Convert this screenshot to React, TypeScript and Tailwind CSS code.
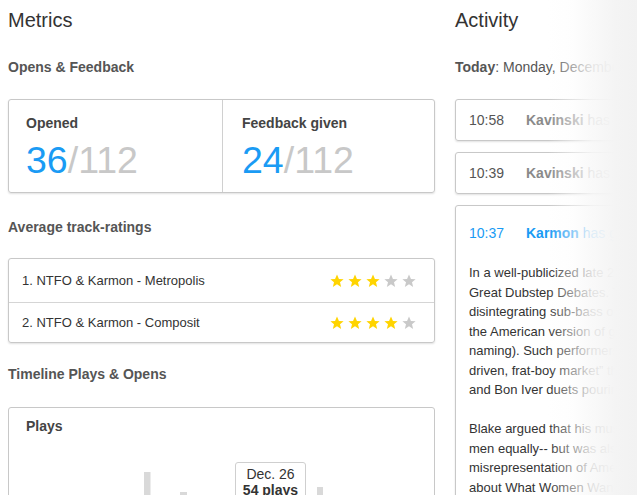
import React from "react";

const Star = ({ on }: { on: boolean }) => (
  <svg width="14" height="14" viewBox="0 0 14 14" className="block">
    <polygon
      points="7,0.6 8.95,4.9 13.6,5.2 10,8.2 11.15,12.9 7,10.35 2.85,12.9 4,8.2 0.4,5.2 5.05,4.9"
      fill={on ? "#FFD400" : "#C9C9C9"}
    />
  </svg>
);

const Stars = ({ n }: { n: number }) => (
  <div className="flex gap-[4px]">
    {[0, 1, 2, 3, 4].map((i) => (
      <Star key={i} on={i < n} />
    ))}
  </div>
);

const lines1 = [
  "In a well-publicized late 2013 interview, James Blake",
  "Great Dubstep Debates. The British producer lamented",
  "disintegrating sub-bass only to have it co-opted by",
  "the American version of guy-oriented dubstep (his",
  "naming). Such performers, he said, catered to a \u201cmacho,",
  "driven, frat-boy market\u201d that had little use for subtlety",
  "and Bon Iver duets pouring from his laptop.",
];

const lines2 = [
  "Blake argued that his music appealed to women and",
  "men equally-- but was also pointing to a larger",
  "misrepresentation of American dance culture, and",
  "about What Women Want, sonically speaking.",
];

export default function App() {
  return (
    <div className="relative w-[637px] h-[495px] overflow-hidden bg-white text-[#333] font-['Liberation_Sans',Arial,sans-serif]">
      <div className="flex pl-[8px] gap-[20px]">
        {/* Left column */}
        <div className="w-[427px] shrink-0">
          <h1 className="mt-[8px] text-[20px] leading-[24px] text-[#333]">Metrics</h1>
          <h2 className="mt-[25px] text-[14px] leading-[20px] font-bold text-[#555]">
            Opens &amp; Feedback
          </h2>
          <div className="mt-[22px] flex border border-[#c8c8c8] rounded-[3px] shadow-[0_1px_2px_rgba(0,0,0,0.12)]">
            <div className="w-[214px] shrink-0 border-r border-[#d0d0d0] pl-[17px] pt-[13px] pb-[12px]">
              <div className="text-[14px] leading-[20px] font-bold text-[#444]">Opened</div>
              <div className="mt-[7px] text-[37.5px] leading-[40px]">
                <span className="text-[#1a9bf4]">36</span>
                <span className="text-[#c8c8c8]">/112</span>
              </div>
            </div>
            <div className="flex-1 pl-[19px] pt-[13px] pb-[12px]">
              <div className="text-[14px] leading-[20px] font-bold text-[#444]">Feedback given</div>
              <div className="mt-[7px] text-[37.5px] leading-[40px]">
                <span className="text-[#1a9bf4]">24</span>
                <span className="text-[#c8c8c8]">/112</span>
              </div>
            </div>
          </div>

          <h2 className="mt-[24px] text-[14px] leading-[20px] font-bold text-[#555]">
            Average track-ratings
          </h2>
          <div className="mt-[21px] border border-[#c8c8c8] rounded-[3px] shadow-[0_1px_2px_rgba(0,0,0,0.12)]">
            <div className="h-[43px] flex items-center justify-between pl-[13px] pr-[18px] text-[13px] text-[#333]">
              <span>1. NTFO &amp; Karmon - Metropolis</span>
              <Stars n={3} />
            </div>
            <div className="h-[40px] border-t border-[#d5d5d5] flex items-center justify-between pl-[13px] pr-[18px] text-[13px] text-[#333]">
              <span>2. NTFO &amp; Karmon - Composit</span>
              <Stars n={4} />
            </div>
          </div>

          <h2 className="mt-[21px] text-[14px] leading-[20px] font-bold text-[#555]">
            Timeline Plays &amp; Opens
          </h2>
          <div className="mt-[23px] border border-[#c8c8c8] rounded-[3px] h-[120px]">
            <div className="pt-[8px] pl-[17px] text-[14px] leading-[20px] font-bold text-[#444]">Plays</div>
            <div className="relative h-[90px]">
              <svg width="425" height="90" className="absolute left-0 top-0">
                <rect x="135" y="36" width="6.5" height="60" fill="#d9d9d9" />
                <rect x="171" y="56" width="7" height="40" fill="#d9d9d9" />
                <rect x="308" y="51" width="6" height="45" fill="#d9d9d9" />
              </svg>
              <div className="absolute left-[226px] top-[26px] w-[71px] h-[44px] bg-white border border-[#cfcfcf] rounded-[3px] pt-[3px] text-center text-[14px] leading-[16px] text-[#333]">
                <div>Dec. 26</div>
                <div className="font-bold">54 plays</div>
              </div>
            </div>
          </div>
        </div>

        {/* Right column */}
        <div className="w-[320px] shrink-0">
          <h1 className="mt-[8px] text-[20px] leading-[24px] text-[#333]">Activity</h1>
          <div className="mt-[25px] text-[14px] leading-[20px] text-[#555] whitespace-nowrap">
            <span className="font-bold">Today</span>: Monday, December 29th
          </div>
          <div className="mt-[22px] h-[42px] flex items-center pl-[13px] border border-[#c8c8c8] rounded-[3px] shadow-[0_1px_2px_rgba(0,0,0,0.12)] text-[14px] whitespace-nowrap">
            <span className="w-[57px] text-[#555]">10:58</span>
            <span className="text-[#8a8a8a]">
              <span className="font-bold">Kavinski</span> has played Metropolis
            </span>
          </div>
          <div className="mt-[11px] h-[42px] flex items-center pl-[13px] border border-[#c8c8c8] rounded-[3px] shadow-[0_1px_2px_rgba(0,0,0,0.12)] text-[14px] whitespace-nowrap">
            <span className="w-[57px] text-[#555]">10:39</span>
            <span className="text-[#8a8a8a]">
              <span className="font-bold">Kavinski</span> has opened the promo
            </span>
          </div>
          <div className="mt-[11px] h-[320px] pl-[13px] pt-[17px] border border-[#c8c8c8] rounded-[3px] shadow-[0_1px_2px_rgba(0,0,0,0.12)] whitespace-nowrap">
            <div className="flex text-[14px] leading-[20px] text-[#1a9bf4]">
              <span className="w-[57px]">10:37</span>
              <span>
                <span className="font-bold">Karmon</span> has given feedback
              </span>
            </div>
            <div className="mt-[20px] text-[13px] leading-[19.5px] text-[#333]">
              {lines1.map((l) => (
                <div key={l}>{l}</div>
              ))}
            </div>
            <div className="mt-[19.5px] text-[13px] leading-[19.5px] text-[#333]">
              {lines2.map((l) => (
                <div key={l}>{l}</div>
              ))}
            </div>
          </div>
        </div>
      </div>

      {/* fade overlay on the right edge */}
      <div className="pointer-events-none absolute top-0 bottom-0 left-[548px] right-0 bg-[linear-gradient(to_right,rgba(255,255,255,0)_0%,rgba(252,252,252,0.5)_28%,rgba(248,248,248,0.88)_50%,rgba(244,244,244,1)_75%,#f2f2f2_100%)]" />
    </div>
  );
}
